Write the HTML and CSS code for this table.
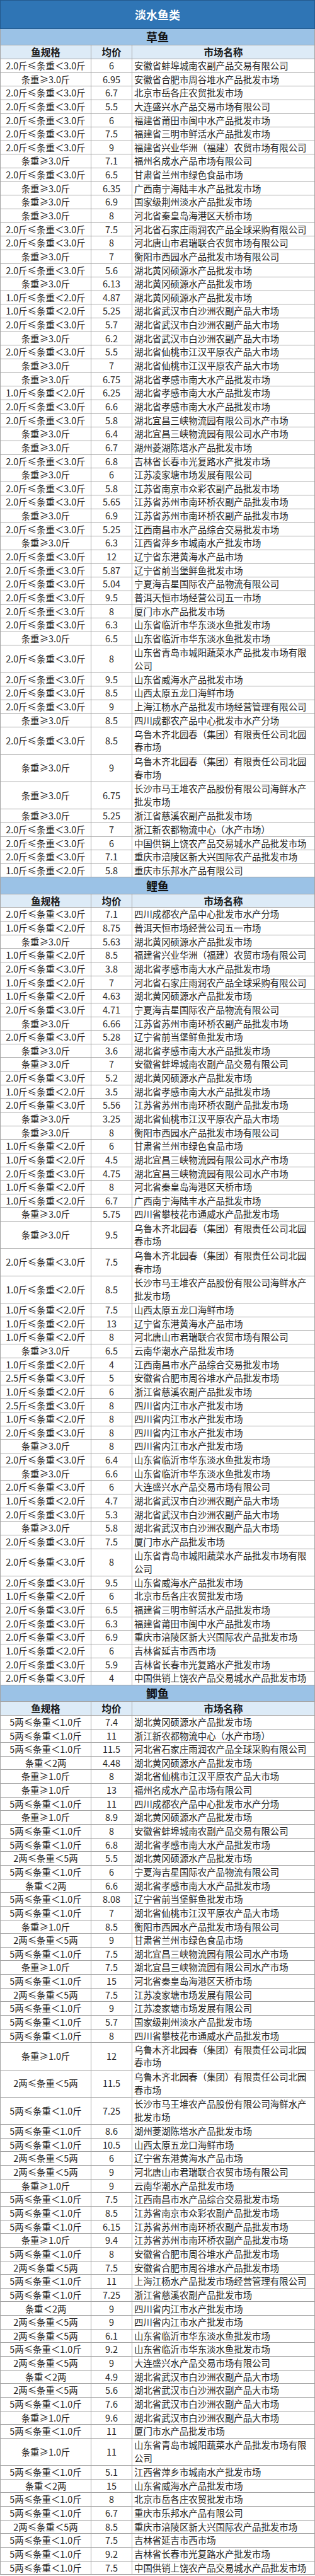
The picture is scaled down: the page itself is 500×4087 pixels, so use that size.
FILE: index.html
```html
<!DOCTYPE html>
<html lang="zh-CN">
<head>
<meta charset="utf-8">
<title>淡水鱼类</title>
<link rel="stylesheet" href="styles.css">
</head>
<body>
<table class="sheet">
<colgroup><col class="c1"><col class="c2"><col class="c3"></colgroup>
<tbody>
<tr class="title"><td colspan="3">淡水鱼类</td></tr>
<tr class="fish"><td colspan="3">草鱼</td></tr>
<tr class="head"><td>鱼规格</td><td>均价</td><td>市场名称</td></tr>
<tr><td>2.0斤≤条重＜3.0斤</td><td>6</td><td class="mk">安徽省蚌埠城南农副产品交易有限公司</td></tr>
<tr><td>条重≥3.0斤</td><td>6.95</td><td class="mk">安徽省合肥市周谷堆水产品批发市场</td></tr>
<tr><td>2.0斤≤条重＜3.0斤</td><td>6.7</td><td class="mk">北京市岳各庄农贸批发市场</td></tr>
<tr><td>2.0斤≤条重＜3.0斤</td><td>5.5</td><td class="mk">大连盛兴水产品交易市场有限公司</td></tr>
<tr><td>2.0斤≤条重＜3.0斤</td><td>6</td><td class="mk">福建省莆田市闽中水产品批发市场</td></tr>
<tr><td>2.0斤≤条重＜3.0斤</td><td>7.5</td><td class="mk">福建省三明市鲜活水产品批发市场</td></tr>
<tr><td>2.0斤≤条重＜3.0斤</td><td>9</td><td class="mk">福建省兴业华洲（福建）农贸市场有限公司</td></tr>
<tr><td>条重≥3.0斤</td><td>7.1</td><td class="mk">福州名成水产品市场有限公司</td></tr>
<tr><td>2.0斤≤条重＜3.0斤</td><td>6.5</td><td class="mk">甘肃省兰州市绿色食品市场</td></tr>
<tr><td>条重≥3.0斤</td><td>6.35</td><td class="mk">广西南宁海陆丰水产品批发市场</td></tr>
<tr><td>条重≥3.0斤</td><td>6.9</td><td class="mk">国家级荆州淡水产品批发市场</td></tr>
<tr><td>条重≥3.0斤</td><td>8</td><td class="mk">河北省秦皇岛海港区天桥市场</td></tr>
<tr><td>2.0斤≤条重＜3.0斤</td><td>7.5</td><td class="mk">河北省石家庄雨润农产品全球采购有限公司</td></tr>
<tr><td>2.0斤≤条重＜3.0斤</td><td>8</td><td class="mk">河北唐山市君瑞联合农贸市场有限公司</td></tr>
<tr><td>条重≥3.0斤</td><td>7</td><td class="mk">衡阳市西园水产品批发市场有限公司</td></tr>
<tr><td>2.0斤≤条重＜3.0斤</td><td>5.6</td><td class="mk">湖北黄冈硕源水产品批发市场</td></tr>
<tr><td>条重≥3.0斤</td><td>6.13</td><td class="mk">湖北黄冈硕源水产品批发市场</td></tr>
<tr><td>1.0斤≤条重＜2.0斤</td><td>4.87</td><td class="mk">湖北黄冈硕源水产品批发市场</td></tr>
<tr><td>1.0斤≤条重＜2.0斤</td><td>5.25</td><td class="mk">湖北省武汉市白沙洲农副产品大市场</td></tr>
<tr><td>2.0斤≤条重＜3.0斤</td><td>5.7</td><td class="mk">湖北省武汉市白沙洲农副产品大市场</td></tr>
<tr><td>条重≥3.0斤</td><td>6.2</td><td class="mk">湖北省武汉市白沙洲农副产品大市场</td></tr>
<tr><td>2.0斤≤条重＜3.0斤</td><td>5.5</td><td class="mk">湖北省仙桃市江汉平原农产品大市场</td></tr>
<tr><td>条重≥3.0斤</td><td>7</td><td class="mk">湖北省仙桃市江汉平原农产品大市场</td></tr>
<tr><td>条重≥3.0斤</td><td>6.75</td><td class="mk">湖北省孝感市南大水产品批发市场</td></tr>
<tr><td>1.0斤≤条重＜2.0斤</td><td>6.25</td><td class="mk">湖北省孝感市南大水产品批发市场</td></tr>
<tr><td>2.0斤≤条重＜3.0斤</td><td>6.6</td><td class="mk">湖北省孝感市南大水产品批发市场</td></tr>
<tr><td>2.0斤≤条重＜3.0斤</td><td>5.8</td><td class="mk">湖北宜昌三峡物流园有限公司水产市场</td></tr>
<tr><td>条重≥3.0斤</td><td>6.4</td><td class="mk">湖北宜昌三峡物流园有限公司水产市场</td></tr>
<tr><td>条重≥3.0斤</td><td>6.7</td><td class="mk">湖州菱湖陈塔水产品批发市场</td></tr>
<tr><td>2.0斤≤条重＜3.0斤</td><td>6.8</td><td class="mk">吉林省长春市光复路水产批发市场</td></tr>
<tr><td>条重≥3.0斤</td><td>6</td><td class="mk">江苏凌家塘市场发展有限公司</td></tr>
<tr><td>2.0斤≤条重＜3.0斤</td><td>5.8</td><td class="mk">江苏省南京市众彩农副产品批发市场</td></tr>
<tr><td>2.0斤≤条重＜3.0斤</td><td>5.65</td><td class="mk">江苏省苏州市南环桥农副产品批发市场</td></tr>
<tr><td>条重≥3.0斤</td><td>6.9</td><td class="mk">江苏省苏州市南环桥农副产品批发市场</td></tr>
<tr><td>2.0斤≤条重＜3.0斤</td><td>5.25</td><td class="mk">江西南昌市水产品综合交易批发市场</td></tr>
<tr><td>条重≥3.0斤</td><td>6.3</td><td class="mk">江西省萍乡市城南水产批发市场</td></tr>
<tr><td>2.0斤≤条重＜3.0斤</td><td>12</td><td class="mk">辽宁省东港黄海水产品市场</td></tr>
<tr><td>2.0斤≤条重＜3.0斤</td><td>5.87</td><td class="mk">辽宁省前当堡鲜鱼批发市场</td></tr>
<tr><td>2.0斤≤条重＜3.0斤</td><td>5.04</td><td class="mk">宁夏海吉星国际农产品物流有限公司</td></tr>
<tr><td>2.0斤≤条重＜3.0斤</td><td>9.5</td><td class="mk">普洱天恒市场经营公司五一市场</td></tr>
<tr><td>2.0斤≤条重＜3.0斤</td><td>8</td><td class="mk">厦门市水产品批发市场</td></tr>
<tr><td>2.0斤≤条重＜3.0斤</td><td>6.3</td><td class="mk">山东省临沂市华东淡水鱼批发市场</td></tr>
<tr><td>条重≥3.0斤</td><td>6.5</td><td class="mk">山东省临沂市华东淡水鱼批发市场</td></tr>
<tr class="two"><td>2.0斤≤条重＜3.0斤</td><td>8</td><td class="mk">山东省青岛市城阳蔬菜水产品批发市场有限公司</td></tr>
<tr><td>2.0斤≤条重＜3.0斤</td><td>9.5</td><td class="mk">山东省威海水产品批发市场</td></tr>
<tr><td>2.0斤≤条重＜3.0斤</td><td>8.5</td><td class="mk">山西太原五龙口海鲜市场</td></tr>
<tr><td>2.0斤≤条重＜3.0斤</td><td>9</td><td class="mk">上海江杨水产品批发市场经营管理有限公司</td></tr>
<tr><td>条重≥3.0斤</td><td>8.5</td><td class="mk">四川成都农产品中心批发市水产分场</td></tr>
<tr class="two"><td>2.0斤≤条重＜3.0斤</td><td>8.5</td><td class="mk">乌鲁木齐北园春（集团）有限责任公司北园春市场</td></tr>
<tr class="two"><td>条重≥3.0斤</td><td>9</td><td class="mk">乌鲁木齐北园春（集团）有限责任公司北园春市场</td></tr>
<tr class="two"><td>条重≥3.0斤</td><td>6.75</td><td class="mk">长沙市马王堆农产品股份有限公司海鲜水产批发市场</td></tr>
<tr><td>条重≥3.0斤</td><td>5.25</td><td class="mk">浙江省慈溪农副产品批发市场</td></tr>
<tr><td>2.0斤≤条重＜3.0斤</td><td>7</td><td class="mk">浙江新农都物流中心（水产市场）</td></tr>
<tr><td>2.0斤≤条重＜3.0斤</td><td>6</td><td class="mk">中国供销上饶农产品交易城水产品批发市场</td></tr>
<tr><td>2.0斤≤条重＜3.0斤</td><td>7.1</td><td class="mk">重庆市涪陵区新大兴国际农产品批发市场</td></tr>
<tr><td>1.0斤≤条重＜2.0斤</td><td>5.8</td><td class="mk">重庆市乐邦水产品有限公司</td></tr>
<tr class="fish"><td colspan="3">鲤鱼</td></tr>
<tr class="head"><td>鱼规格</td><td>均价</td><td>市场名称</td></tr>
<tr><td>2.0斤≤条重＜3.0斤</td><td>7.1</td><td class="mk">四川成都农产品中心批发市水产分场</td></tr>
<tr><td>1.0斤≤条重＜2.0斤</td><td>8.75</td><td class="mk">普洱天恒市场经营公司五一市场</td></tr>
<tr><td>条重≥3.0斤</td><td>5.63</td><td class="mk">湖北黄冈硕源水产品批发市场</td></tr>
<tr><td>1.0斤≤条重＜2.0斤</td><td>8.5</td><td class="mk">福建省兴业华洲（福建）农贸市场有限公司</td></tr>
<tr><td>2.0斤≤条重＜3.0斤</td><td>3.8</td><td class="mk">湖北省孝感市南大水产品批发市场</td></tr>
<tr><td>1.0斤≤条重＜2.0斤</td><td>7</td><td class="mk">河北省石家庄雨润农产品全球采购有限公司</td></tr>
<tr><td>1.0斤≤条重＜2.0斤</td><td>4.63</td><td class="mk">湖北黄冈硕源水产品批发市场</td></tr>
<tr><td>2.0斤≤条重＜3.0斤</td><td>4.71</td><td class="mk">宁夏海吉星国际农产品物流有限公司</td></tr>
<tr><td>条重≥3.0斤</td><td>6.66</td><td class="mk">江苏省苏州市南环桥农副产品批发市场</td></tr>
<tr><td>2.0斤≤条重＜3.0斤</td><td>5.28</td><td class="mk">辽宁省前当堡鲜鱼批发市场</td></tr>
<tr><td>条重≥3.0斤</td><td>3.6</td><td class="mk">湖北省孝感市南大水产品批发市场</td></tr>
<tr><td>条重≥3.0斤</td><td>7</td><td class="mk">安徽省蚌埠城南农副产品交易有限公司</td></tr>
<tr><td>2.0斤≤条重＜3.0斤</td><td>5.2</td><td class="mk">湖北黄冈硕源水产品批发市场</td></tr>
<tr><td>1.0斤≤条重＜2.0斤</td><td>3.5</td><td class="mk">湖北省孝感市南大水产品批发市场</td></tr>
<tr><td>2.0斤≤条重＜3.0斤</td><td>5.56</td><td class="mk">江苏省苏州市南环桥农副产品批发市场</td></tr>
<tr><td>条重≥3.0斤</td><td>3.25</td><td class="mk">湖北省仙桃市江汉平原农产品大市场</td></tr>
<tr><td>条重≥3.0斤</td><td>8</td><td class="mk">衡阳市西园水产品批发市场有限公司</td></tr>
<tr><td>1.0斤≤条重＜2.0斤</td><td>6</td><td class="mk">甘肃省兰州市绿色食品市场</td></tr>
<tr><td>1.0斤≤条重＜2.0斤</td><td>4.5</td><td class="mk">湖北宜昌三峡物流园有限公司水产市场</td></tr>
<tr><td>2.0斤≤条重＜3.0斤</td><td>4.75</td><td class="mk">湖北宜昌三峡物流园有限公司水产市场</td></tr>
<tr><td>1.0斤≤条重＜2.0斤</td><td>8</td><td class="mk">河北省秦皇岛海港区天桥市场</td></tr>
<tr><td>1.0斤≤条重＜2.0斤</td><td>6.7</td><td class="mk">广西南宁海陆丰水产品批发市场</td></tr>
<tr><td>条重≥3.0斤</td><td>5.75</td><td class="mk">四川省攀枝花市通威水产品批发市场</td></tr>
<tr class="two"><td>条重≥3.0斤</td><td>9.5</td><td class="mk">乌鲁木齐北园春（集团）有限责任公司北园春市场</td></tr>
<tr class="two"><td>2.0斤≤条重＜3.0斤</td><td>7.5</td><td class="mk">乌鲁木齐北园春（集团）有限责任公司北园春市场</td></tr>
<tr class="two"><td>1.0斤≤条重＜2.0斤</td><td>8.5</td><td class="mk">长沙市马王堆农产品股份有限公司海鲜水产批发市场</td></tr>
<tr><td>1.0斤≤条重＜2.0斤</td><td>7.5</td><td class="mk">山西太原五龙口海鲜市场</td></tr>
<tr><td>1.0斤≤条重＜2.0斤</td><td>13</td><td class="mk">辽宁省东港黄海水产品市场</td></tr>
<tr><td>1.0斤≤条重＜2.0斤</td><td>8</td><td class="mk">河北唐山市君瑞联合农贸市场有限公司</td></tr>
<tr><td>条重≥3.0斤</td><td>6.5</td><td class="mk">云南华潮水产品批发市场</td></tr>
<tr><td>1.0斤≤条重＜2.0斤</td><td>4</td><td class="mk">江西南昌市水产品综合交易批发市场</td></tr>
<tr><td>2.5斤≤条重＜3.0斤</td><td>5</td><td class="mk">安徽省合肥市周谷堆水产品批发市场</td></tr>
<tr><td>1.0斤≤条重＜2.0斤</td><td>6</td><td class="mk">浙江省慈溪农副产品批发市场</td></tr>
<tr><td>2.5斤≤条重＜3.0斤</td><td>8</td><td class="mk">四川省内江市水产批发市场</td></tr>
<tr><td>1.0斤≤条重＜2.0斤</td><td>8</td><td class="mk">四川省内江市水产批发市场</td></tr>
<tr><td>2.0斤≤条重＜3.0斤</td><td>8</td><td class="mk">四川省内江市水产批发市场</td></tr>
<tr><td>条重≥3.0斤</td><td>8</td><td class="mk">四川省内江市水产批发市场</td></tr>
<tr><td>2.0斤≤条重＜3.0斤</td><td>6.4</td><td class="mk">山东省临沂市华东淡水鱼批发市场</td></tr>
<tr><td>条重≥3.0斤</td><td>6.6</td><td class="mk">山东省临沂市华东淡水鱼批发市场</td></tr>
<tr><td>2.0斤≤条重＜3.0斤</td><td>6</td><td class="mk">大连盛兴水产品交易市场有限公司</td></tr>
<tr><td>1.0斤≤条重＜2.0斤</td><td>4.7</td><td class="mk">湖北省武汉市白沙洲农副产品大市场</td></tr>
<tr><td>2.0斤≤条重＜3.0斤</td><td>5.3</td><td class="mk">湖北省武汉市白沙洲农副产品大市场</td></tr>
<tr><td>条重≥3.0斤</td><td>5.8</td><td class="mk">湖北省武汉市白沙洲农副产品大市场</td></tr>
<tr><td>2.0斤≤条重＜3.0斤</td><td>7.5</td><td class="mk">厦门市水产品批发市场</td></tr>
<tr class="two"><td>2.0斤≤条重＜3.0斤</td><td>8</td><td class="mk">山东省青岛市城阳蔬菜水产品批发市场有限公司</td></tr>
<tr><td>2.0斤≤条重＜3.0斤</td><td>9.5</td><td class="mk">山东省威海水产品批发市场</td></tr>
<tr><td>1.0斤≤条重＜2.0斤</td><td>6</td><td class="mk">北京市岳各庄农贸批发市场</td></tr>
<tr><td>2.0斤≤条重＜3.0斤</td><td>6.5</td><td class="mk">福建省三明市鲜活水产品批发市场</td></tr>
<tr><td>2.0斤≤条重＜3.0斤</td><td>6.3</td><td class="mk">福建省莆田市闽中水产品批发市场</td></tr>
<tr><td>2.0斤≤条重＜3.0斤</td><td>6.9</td><td class="mk">重庆市涪陵区新大兴国际农产品批发市场</td></tr>
<tr><td>1.0斤≤条重＜2.0斤</td><td>6</td><td class="mk">吉林省延吉市西市场</td></tr>
<tr><td>2.0斤≤条重＜3.0斤</td><td>5.9</td><td class="mk">吉林省长春市光复路水产批发市场</td></tr>
<tr><td>2.0斤≤条重＜3.0斤</td><td>4</td><td class="mk">中国供销上饶农产品交易城水产品批发市场</td></tr>
<tr class="fish"><td colspan="3">鲫鱼</td></tr>
<tr class="head"><td>鱼规格</td><td>均价</td><td>市场名称</td></tr>
<tr><td>5两≤条重＜1.0斤</td><td>7.4</td><td class="mk">湖北黄冈硕源水产品批发市场</td></tr>
<tr><td>5两≤条重＜1.0斤</td><td>11</td><td class="mk">浙江新农都物流中心（水产市场）</td></tr>
<tr><td>5两≤条重＜1.0斤</td><td>11.5</td><td class="mk">河北省石家庄雨润农产品全球采购有限公司</td></tr>
<tr><td>条重＜2两</td><td>4.48</td><td class="mk">湖北黄冈硕源水产品批发市场</td></tr>
<tr><td>条重≥1.0斤</td><td>8</td><td class="mk">湖北省仙桃市江汉平原农产品大市场</td></tr>
<tr><td>条重≥1.0斤</td><td>13</td><td class="mk">福州名成水产品市场有限公司</td></tr>
<tr><td>5两≤条重＜1.0斤</td><td>11</td><td class="mk">四川成都农产品中心批发市水产分场</td></tr>
<tr><td>条重≥1.0斤</td><td>8.9</td><td class="mk">湖北黄冈硕源水产品批发市场</td></tr>
<tr><td>5两≤条重＜1.0斤</td><td>8</td><td class="mk">安徽省蚌埠城南农副产品交易有限公司</td></tr>
<tr><td>5两≤条重＜1.0斤</td><td>6.8</td><td class="mk">湖北省孝感市南大水产品批发市场</td></tr>
<tr><td>2两≤条重＜5两</td><td>5.5</td><td class="mk">湖北黄冈硕源水产品批发市场</td></tr>
<tr><td>5两≤条重＜1.0斤</td><td>6</td><td class="mk">宁夏海吉星国际农产品物流有限公司</td></tr>
<tr><td>条重＜2两</td><td>6.6</td><td class="mk">湖北省孝感市南大水产品批发市场</td></tr>
<tr><td>5两≤条重＜1.0斤</td><td>8.08</td><td class="mk">辽宁省前当堡鲜鱼批发市场</td></tr>
<tr><td>5两≤条重＜1.0斤</td><td>7</td><td class="mk">湖北省仙桃市江汉平原农产品大市场</td></tr>
<tr><td>条重≥1.0斤</td><td>8.5</td><td class="mk">衡阳市西园水产品批发市场有限公司</td></tr>
<tr><td>2两≤条重＜5两</td><td>9</td><td class="mk">甘肃省兰州市绿色食品市场</td></tr>
<tr><td>5两≤条重＜1.0斤</td><td>7.5</td><td class="mk">湖北宜昌三峡物流园有限公司水产市场</td></tr>
<tr><td>条重≥1.0斤</td><td>7.5</td><td class="mk">湖北宜昌三峡物流园有限公司水产市场</td></tr>
<tr><td>5两≤条重＜1.0斤</td><td>15</td><td class="mk">河北省秦皇岛海港区天桥市场</td></tr>
<tr><td>2两≤条重＜5两</td><td>7.5</td><td class="mk">江苏凌家塘市场发展有限公司</td></tr>
<tr><td>5两≤条重＜1.0斤</td><td>9</td><td class="mk">江苏凌家塘市场发展有限公司</td></tr>
<tr><td>5两≤条重＜1.0斤</td><td>5.7</td><td class="mk">国家级荆州淡水产品批发市场</td></tr>
<tr><td>5两≤条重＜1.0斤</td><td>8</td><td class="mk">四川省攀枝花市通威水产品批发市场</td></tr>
<tr class="two"><td>条重≥1.0斤</td><td>12</td><td class="mk">乌鲁木齐北园春（集团）有限责任公司北园春市场</td></tr>
<tr class="two"><td>2两≤条重＜5两</td><td>11.5</td><td class="mk">乌鲁木齐北园春（集团）有限责任公司北园春市场</td></tr>
<tr class="two"><td>5两≤条重＜1.0斤</td><td>7.25</td><td class="mk">长沙市马王堆农产品股份有限公司海鲜水产批发市场</td></tr>
<tr><td>5两≤条重＜1.0斤</td><td>8.6</td><td class="mk">湖州菱湖陈塔水产品批发市场</td></tr>
<tr><td>5两≤条重＜1.0斤</td><td>10.5</td><td class="mk">山西太原五龙口海鲜市场</td></tr>
<tr><td>2两≤条重＜5两</td><td>6</td><td class="mk">辽宁省东港黄海水产品市场</td></tr>
<tr><td>2两≤条重＜5两</td><td>9</td><td class="mk">河北唐山市君瑞联合农贸市场有限公司</td></tr>
<tr><td>条重≥1.0斤</td><td>9</td><td class="mk">云南华潮水产品批发市场</td></tr>
<tr><td>5两≤条重＜1.0斤</td><td>7.5</td><td class="mk">江西南昌市水产品综合交易批发市场</td></tr>
<tr><td>5两≤条重＜1.0斤</td><td>8.5</td><td class="mk">江苏省南京市众彩农副产品批发市场</td></tr>
<tr><td>5两≤条重＜1.0斤</td><td>6.15</td><td class="mk">江苏省苏州市南环桥农副产品批发市场</td></tr>
<tr><td>条重≥1.0斤</td><td>9.4</td><td class="mk">江苏省苏州市南环桥农副产品批发市场</td></tr>
<tr><td>5两≤条重＜1.0斤</td><td>8</td><td class="mk">安徽省合肥市周谷堆水产品批发市场</td></tr>
<tr><td>2两≤条重＜5两</td><td>7.5</td><td class="mk">安徽省合肥市周谷堆水产品批发市场</td></tr>
<tr><td>5两≤条重＜1.0斤</td><td>11</td><td class="mk">上海江杨水产品批发市场经营管理有限公司</td></tr>
<tr><td>5两≤条重＜1.0斤</td><td>7.25</td><td class="mk">浙江省慈溪农副产品批发市场</td></tr>
<tr><td>条重＜2两</td><td>9</td><td class="mk">四川省内江市水产批发市场</td></tr>
<tr><td>2两≤条重＜5两</td><td>9</td><td class="mk">四川省内江市水产批发市场</td></tr>
<tr><td>2两≤条重＜5两</td><td>6.1</td><td class="mk">山东省临沂市华东淡水鱼批发市场</td></tr>
<tr><td>5两≤条重＜1.0斤</td><td>9.2</td><td class="mk">山东省临沂市华东淡水鱼批发市场</td></tr>
<tr><td>2两≤条重＜5两</td><td>9</td><td class="mk">大连盛兴水产品交易市场有限公司</td></tr>
<tr><td>条重＜2两</td><td>4.9</td><td class="mk">湖北省武汉市白沙洲农副产品大市场</td></tr>
<tr><td>2两≤条重＜5两</td><td>5.6</td><td class="mk">湖北省武汉市白沙洲农副产品大市场</td></tr>
<tr><td>5两≤条重＜1.0斤</td><td>7.6</td><td class="mk">湖北省武汉市白沙洲农副产品大市场</td></tr>
<tr><td>条重≥1.0斤</td><td>9.6</td><td class="mk">湖北省武汉市白沙洲农副产品大市场</td></tr>
<tr><td>5两≤条重＜1.0斤</td><td>11</td><td class="mk">厦门市水产品批发市场</td></tr>
<tr class="two"><td>条重≥1.0斤</td><td>11</td><td class="mk">山东省青岛市城阳蔬菜水产品批发市场有限公司</td></tr>
<tr><td>5两≤条重＜1.0斤</td><td>5.1</td><td class="mk">江西省萍乡市城南水产批发市场</td></tr>
<tr><td>条重＜2两</td><td>15</td><td class="mk">山东省威海水产品批发市场</td></tr>
<tr><td>5两≤条重＜1.0斤</td><td>8</td><td class="mk">北京市岳各庄农贸批发市场</td></tr>
<tr><td>5两≤条重＜1.0斤</td><td>6.7</td><td class="mk">重庆市乐邦水产品有限公司</td></tr>
<tr><td>2两≤条重＜5两</td><td>8.5</td><td class="mk">重庆市涪陵区新大兴国际农产品批发市场</td></tr>
<tr><td>5两≤条重＜1.0斤</td><td>7.5</td><td class="mk">吉林省延吉市西市场</td></tr>
<tr><td>5两≤条重＜1.0斤</td><td>9.2</td><td class="mk">吉林省长春市光复路水产批发市场</td></tr>
<tr><td>5两≤条重＜1.0斤</td><td>7.5</td><td class="mk">中国供销上饶农产品交易城水产品批发市场</td></tr>
</tbody>
</table>
</body>
</html>
```

FILE: styles.css
```css
html, body {
  margin: 0;
  padding: 0;
  background: #ffffff;
}

body {
  font-family: "Noto Sans CJK SC", "Noto Sans", sans-serif;
  color: #262626;
}

.sheet {
  width: 499px;
  border-collapse: collapse;
  table-layout: fixed;
}

.c1 { width: 144px; }
.c2 { width: 65px; }
.c3 { width: 290px; }

.sheet tr {
  height: 21.65px;
}

.sheet td {
  border: 1px solid #a3a3a3;
  padding: 0;
  font-size: 14.4px;
  line-height: 20.6px;
  text-align: center;
  vertical-align: middle;
  background: #ffffff;
  overflow: hidden;
}

.sheet td.mk {
  text-align: left;
  padding-left: 3px;
}

.sheet tr.two {
  height: 43.3px;
}

.sheet tr.title {
  height: 45px;
}

.sheet tr.title td {
  background: #2f75b5;
  color: #ffffff;
  font-weight: bold;
  font-size: 18px;
  border-color: #23598c;
}

.sheet tr.fish {
  height: 26.3px;
}

.sheet tr.fish td {
  background: #9bc2e6;
  color: #111111;
  font-weight: bold;
  font-size: 18px;
}

.sheet tr.head td {
  background: #ddebf7;
  color: #1a1a1a;
  font-weight: bold;
  font-size: 15.5px;
}
```
